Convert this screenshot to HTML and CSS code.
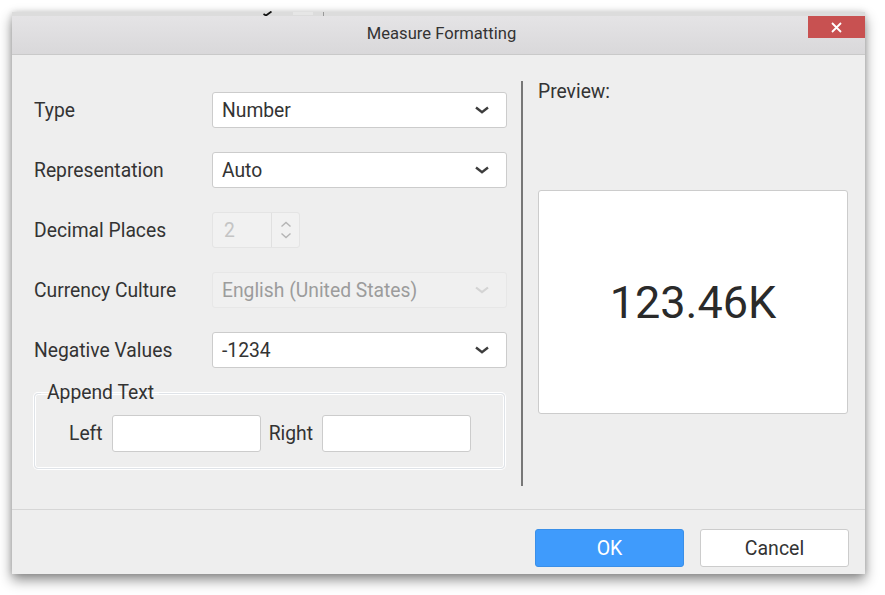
FILE: index.html
```html
<!DOCTYPE html>
<html>
<head>
<meta charset="utf-8">
<link rel="stylesheet" href="styles.css">
</head>
<body>
<div class="desk">
  <div class="dialog">
    <div class="header">
      <div class="strip">
        <span class="strip-check"><svg width="9" height="5" viewBox="0 0 9 5"><path d="M0.5 3 L3 4.5 L8.5 0.5" fill="none" stroke="#111" stroke-width="1.8"/></svg></span>
        <span class="strip-rect"></span>
        <span class="strip-line"></span>
      </div>
      <div class="title">Measure Formatting</div>
      <button class="close" aria-label="Close"><svg width="11" height="11" viewBox="0 0 11 11"><path d="M1 1 L10 10 M10 1 L1 10" stroke="#fff" stroke-width="1.8" fill="none"/></svg></button>
    </div>
    <div class="content">
      <div class="left">
        <div class="row">
          <div class="label">Type</div>
          <div class="select"><span>Number</span><svg class="chev" width="16" height="8" viewBox="0 0 16 8"><path d="M2 1.5 L8 6.2 L14 1.5" fill="none" stroke="#3c3c3c" stroke-width="2.4"/></svg></div>
        </div>
        <div class="row">
          <div class="label">Representation</div>
          <div class="select"><span>Auto</span><svg class="chev" width="16" height="8" viewBox="0 0 16 8"><path d="M2 1.5 L8 6.2 L14 1.5" fill="none" stroke="#3c3c3c" stroke-width="2.4"/></svg></div>
        </div>
        <div class="row">
          <div class="label">Decimal Places</div>
          <div class="numeric">
            <span class="num-val">2</span>
            <span class="spin">
              <svg width="12" height="7" viewBox="0 0 12 7"><path d="M1.5 5.5 L6 1.5 L10.5 5.5" fill="none" stroke="#b4b4b4" stroke-width="1.4"/></svg>
              <svg width="12" height="7" viewBox="0 0 12 7"><path d="M1.5 1.5 L6 5.5 L10.5 1.5" fill="none" stroke="#b4b4b4" stroke-width="1.4"/></svg>
            </span>
          </div>
        </div>
        <div class="row">
          <div class="label">Currency Culture</div>
          <div class="select disabled"><span>English (United States)</span><svg class="chev" width="16" height="8" viewBox="0 0 16 8"><path d="M2 1.5 L8 6.2 L14 1.5" fill="none" stroke="#d4d4d4" stroke-width="2.2"/></svg></div>
        </div>
        <div class="row">
          <div class="label">Negative Values</div>
          <div class="select"><span>-1234</span><svg class="chev" width="16" height="8" viewBox="0 0 16 8"><path d="M2 1.5 L8 6.2 L14 1.5" fill="none" stroke="#3c3c3c" stroke-width="2.4"/></svg></div>
        </div>
        <fieldset class="append">
          <legend>Append Text</legend>
          <div class="append-row">
            <span class="alabel">Left</span>
            <span class="textbox"></span>
            <span class="alabel">Right</span>
            <span class="textbox"></span>
          </div>
        </fieldset>
      </div>
      <div class="divider"></div>
      <div class="right">
        <div class="preview-label">Preview:</div>
        <div class="preview-box">123.46K</div>
      </div>
    </div>
    <div class="footer">
      <button class="btn ok">OK</button>
      <button class="btn cancel">Cancel</button>
    </div>
  </div>
</div>
</body>
</html>
```

FILE: styles.css
```css
* { box-sizing: border-box; }
html, body { margin: 0; padding: 0; background: #ffffff; }
body { font-family: Roboto, "Liberation Sans", sans-serif; color: #333333; min-height: 595px; }

.desk { padding: 12px 20px 0 12px; }

.dialog {
  width: 853px;
  height: 562px;
  background: #eeeeee;
  box-shadow: 0 6px 12px rgba(0,0,0,0.45), 0 0 6px rgba(0,0,0,0.14);
  display: flex;
  flex-direction: column;
}

.header {
  position: relative;
  height: 43px;
  background: linear-gradient(#e6e5e7, #d9d8da);
  border-bottom: 1px solid #c9c9c9;
  display: flex;
  flex-direction: column;
}
.strip {
  position: relative;
  height: 4px;
  background: #dcdcdc;
}
.strip-check { position: absolute; left: 251px; top: -1px; line-height: 0; }
.strip-rect { position: absolute; left: 281px; top: 0; width: 20px; height: 3px; background: #e6e6e6; }
.strip-line { position: absolute; left: 311px; top: 0; width: 1px; height: 4px; background: #999; }

.title {
  flex: 1;
  display: flex;
  align-items: center;
  justify-content: center;
  font-size: 16.6px;
  color: #333;
  padding: 0 0 3px 6px;
}
.close {
  position: absolute;
  right: 0;
  top: 4px;
  width: 57px;
  height: 22px;
  border: none;
  padding: 0;
  background: #c85151;
  display: flex;
  align-items: center;
  justify-content: center;
}

.content {
  height: 455px;
  display: flex;
  border-bottom: 1px solid #d6d6d6;
}

.left {
  width: 495px;
  padding: 37px 0 0 22px;
  display: flex;
  flex-direction: column;
  gap: 24px;
}
.row {
  display: flex;
  align-items: center;
  height: 36px;
}
.label {
  width: 178px;
  font-size: 19.3px;
  color: #333;
}
.select {
  width: 295px;
  height: 36px;
  background: #ffffff;
  border: 1px solid #cccccc;
  border-radius: 3px;
  display: flex;
  align-items: center;
  justify-content: space-between;
  padding: 0 16px 0 9px;
  font-size: 19.3px;
  color: #333;
}
.select.disabled {
  background: #f0f0f0;
  border-color: #e7e7e7;
  color: #9c9c9c;
}
.chev { display: block; }

.numeric {
  width: 88px;
  height: 36px;
  background: #f1f1f1;
  border: 1px solid #e4e4e4;
  border-radius: 3px;
  display: flex;
}
.num-val {
  width: 59px;
  border-right: 1px solid #e0e0e0;
  display: flex;
  align-items: center;
  padding-left: 11px;
  font-size: 19.3px;
  color: #c4c4c4;
}
.spin {
  flex: 1;
  display: flex;
  flex-direction: column;
  align-items: center;
  justify-content: center;
  gap: 4px;
}
.spin svg { display: block; }

.append {
  margin: -9px 0 0 0;
  width: 471px;
  height: 86px;
  border: 1px solid #dfe3e8;
  box-shadow: inset 0 0 0 1px #ffffff, 0 0 0 1px #ffffff;
  border-radius: 4px;
  padding: 0 0 0 34px;
}
.append legend {
  font-size: 19.3px;
  color: #333;
  padding: 0 5px 0 6px;
  margin-left: -28px;
  line-height: 20px;
}
.append-row {
  display: flex;
  align-items: center;
  margin-top: 12px;
}
.alabel { font-size: 19.3px; color: #333; margin-right: 9px; }
.textbox {
  width: 149px;
  height: 37px;
  background: #fff;
  border: 1px solid #cccccc;
  border-radius: 3px;
  margin-right: 8px;
}

.divider {
  width: 2px;
  height: 405px;
  margin: 26px 0 0 14px;
  background: #777777;
}

.right {
  width: 310px;
  margin-left: 15px;
  padding-top: 26px;
  display: flex;
  flex-direction: column;
}
.preview-label {
  font-size: 19.3px;
  line-height: 22px;
  color: #333;
}
.preview-box {
  margin-top: 87px;
  height: 224px;
  background: #ffffff;
  border: 1px solid #cccccc;
  border-radius: 3px;
  display: flex;
  align-items: center;
  justify-content: center;
  font-size: 45px;
  color: #2a2a2a;
}

.footer {
  flex: 1;
  display: flex;
  justify-content: flex-end;
  gap: 16px;
  padding: 19px 16px 0 0;
}
.btn {
  width: 149px;
  height: 38px;
  border-radius: 3px;
  font-family: Roboto, "Liberation Sans", sans-serif;
  font-size: 19.5px;
}
.ok {
  background: #3f9bfc;
  border: 1px solid #3a8fe8;
  color: #ffffff;
}
.cancel {
  background: #ffffff;
  border: 1px solid #cccccc;
  color: #333;
}
```
